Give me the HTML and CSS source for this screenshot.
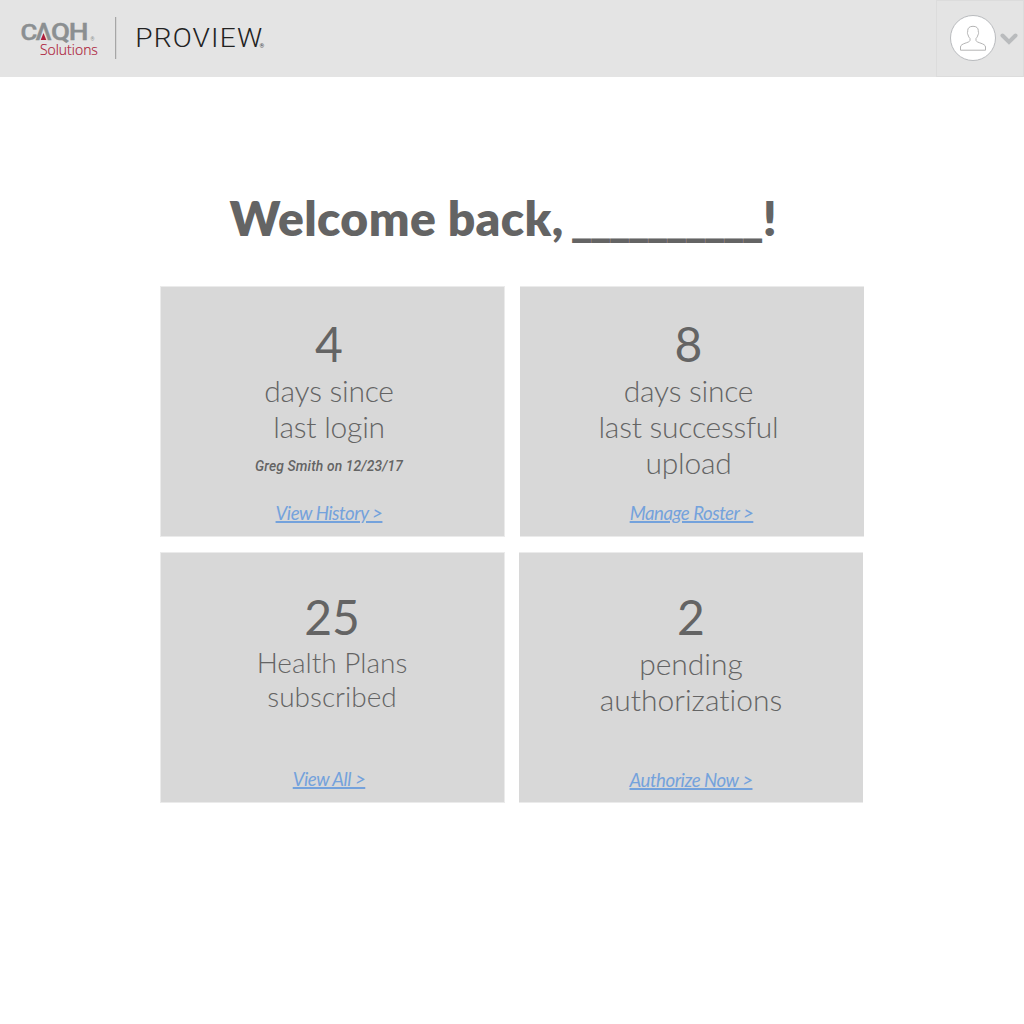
FILE: index.html
```html
<!DOCTYPE html>
<html lang="en">
<head>
<meta charset="utf-8">
<title>CAQH ProView</title>
<link rel="stylesheet" href="styles.css">
</head>
<body>
<header class="topbar">
  <svg class="brand" width="280" height="76" viewBox="0 0 280 76" role="img" aria-label="CAQH Solutions ProView">
    <g class="brand-caqh">
      <text transform="translate(20.600 40) scale(1.120 1)">C</text>
      <text transform="translate(35.400 40) scale(1.080 1)">Λ</text>
      <text transform="translate(51 40) scale(1.200 1)">Q</text>
      <text transform="translate(68.800 40) scale(1.210 1)">H</text>
    </g>
    <path d="M43.500 33 46.300 40H40.700Z" fill="#ae1f3c"/>
    <text class="brand-mark" x="90.500" y="40.500">®</text>
    <text class="brand-solutions" x="39.900" y="55" textLength="58" lengthAdjust="spacingAndGlyphs">Solutions</text>
    <path d="M115.700 17V59" stroke="#989898"/>
    <text class="brand-proview" transform="translate(135.200 47) scale(1.080 1)" textLength="117.500" lengthAdjust="spacing">PROVIEW</text>
    <text class="brand-reg" x="259.500" y="47.500">®</text>
  </svg>
  <button class="account" aria-label="Account menu">
    <svg width="88" height="76" viewBox="0 0 88 76">
      <circle cx="37" cy="38" r="22.500" fill="#fff" stroke="#b9bbbe"/>
      <path d="M37 26.300C33.500 26.300 31.700 28 31.700 30.700V32C31.100 32.700 31.500 34 32.100 35C32.400 36.700 33.200 37.500 34 38.500V40.500C33.500 43 24.500 43.200 24.500 47V50.200H49.500V47C49.500 43.200 40.500 43 40 40.500V38.500C40.800 37.500 41.600 36.700 41.900 35C42.500 34 42.900 32.700 42.300 32V30.700C42.300 28 40.500 26.300 37 26.300Z" fill="#fff" stroke="#b4b4b4"/>
      <path d="M66.500 35.500 73 42 79.500 35.500" fill="none" stroke="#b9bbbd" stroke-width="4" stroke-linecap="round"/>
    </svg>
  </button>
</header>
<main class="dashboard">
  <h1 class="welcome">Welcome back, <span class="name-blank">__________</span>!</h1>
  <div class="card-row">
    <section class="card card-login">
      <div class="count">4</div>
      <p class="label">days since<br>last login</p>
      <p class="detail">Greg Smith on 12/23/17</p>
      <a class="action" href="#">View History &gt;</a>
    </section>
    <section class="card card-upload">
      <div class="count">8</div>
      <p class="label">days since<br>last successful<br>upload</p>
      <a class="action" href="#">Manage Roster &gt;</a>
    </section>
  </div>
  <div class="card-row card-row-lower">
    <section class="card card-plans">
      <div class="count">25</div>
      <p class="label label-small">Health Plans<br>subscribed</p>
      <a class="action" href="#">View All &gt;</a>
    </section>
    <section class="card card-auth">
      <div class="count">2</div>
      <p class="label label-auth">pending<br>authorizations</p>
      <a class="action" href="#">Authorize Now &gt;</a>
    </section>
  </div>
</main>
</body>
</html>
```
FILE: styles.css
```css
* { box-sizing: border-box; }
body {
  margin: 0;
  background: #fff;
  color: #646464;
  font-family: Lato, "Liberation Sans", sans-serif;
  font-variant-ligatures: none;
}
.topbar {
  display: flex;
  justify-content: space-between;
  height: 77px;
  background: #e4e4e4;
}
.brand { display: block; }
.brand-caqh { font: 500 23px Roboto, sans-serif; fill: #8b8f91; stroke: #8b8f91; stroke-width: .4; }
.brand-mark { font: 5px Roboto, sans-serif; fill: #8b8f91; }
.brand-solutions { font: 300 15px "Open Sans", sans-serif; fill: #ae1f3c; stroke: #ae1f3c; stroke-width: .2; }
.brand-proview { font: 300 26px Roboto, sans-serif; fill: #222; }
.brand-reg { font: 6px Roboto, sans-serif; fill: #444; }
.account {
  display: flex;
  align-items: flex-start;
  width: 88px;
  height: 77px;
  padding: 0;
  border: 1px solid #dcdcdc;
  background: #e4e4e4;
}
.account svg { flex: none; margin: -1px; }
.dashboard { padding: 112px 160px 0; }
.welcome {
  margin: 0 0 39px 69.5px;
  font-size: 48px;
  line-height: 58px;
  font-weight: 800;
  letter-spacing: .4px;
  white-space: nowrap;
}
.name-blank { margin-left: -5px; letter-spacing: -3.7px; margin-right: 2.500px; }
.card-row { display: flex; gap: 15px; }
.card-row-lower { margin-top: 15px; }
.card {
  display: flex;
  flex-direction: column;
  align-items: center;
  flex: none;
  width: 345px;
  height: 251px;
  padding: 28px 7px 12px 0;
  border: 1px solid #ebebeb;
  background: #d8d8d8;
  text-align: center;
}
.card-upload, .card-auth { width: 344px; border-width: 1px 0; }
.card-upload .action { margin-left: 6px; }
.card-plans { padding-top: 35px; padding-right: 1px; }
.card-auth { margin-left: -1px; padding: 35px 0 11px; }
.count { font-size: 48px; line-height: 57px; }
.label {
  margin: 0;
  font-size: 30px;
  line-height: 36px;
  font-weight: 300;
  letter-spacing: -.25px;
  white-space: nowrap;
}
.label-small { font-size: 28px; line-height: 34px; letter-spacing: 0; }
.label-auth { letter-spacing: 0; }
.detail {
  margin: 14px 0 0;
  font: italic 500 13.8px/16px Roboto, sans-serif;
  letter-spacing: .15px;
}
.action {
  margin-top: auto;
  color: #74a2dc;
  font-size: 18.6px;
  line-height: 22px;
  font-style: italic;
  letter-spacing: -.45px;
  text-decoration-thickness: 1.6px;
}
.card-plans .action { margin-right: 6px; }
```
